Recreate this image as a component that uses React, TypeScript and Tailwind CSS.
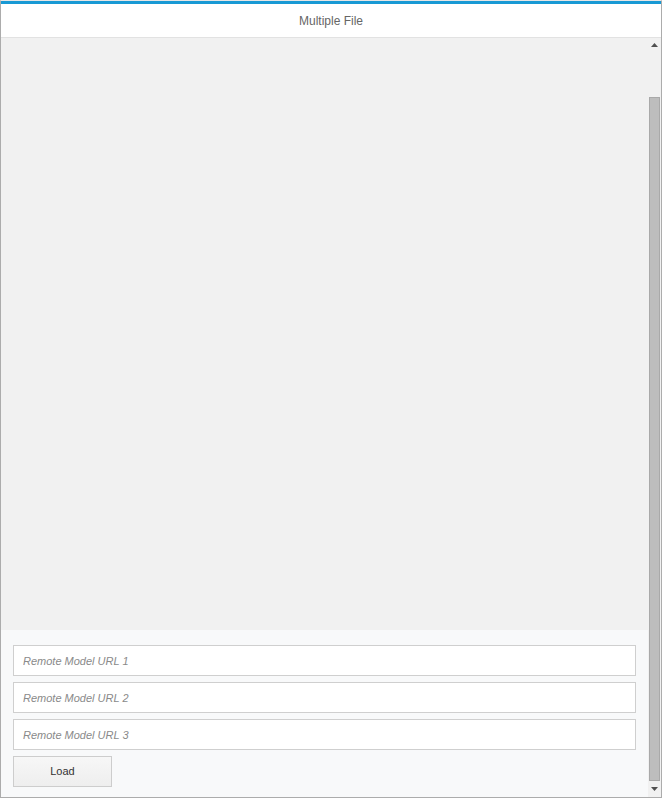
import React from "react";

const urls = ["Remote Model URL 1", "Remote Model URL 2", "Remote Model URL 3"];

function Scrollbar() {
  return (
    <div className="flex w-[13px] shrink-0 flex-col bg-[#f1f1f1]">
      <div className="flex h-[14px] items-center justify-center">
        <svg width="7" height="4" viewBox="0 0 7 4">
          <path d="M0 4 L3.5 0 L7 4 Z" fill="#505050" />
        </svg>
      </div>
      <div className="flex flex-1 flex-col px-px">
        <div className="h-[45px]" />
        <div className="flex-1 border border-[#a9a9a9] bg-[#bdbdbd]" />
      </div>
      <div className="flex h-[16px] items-center justify-center">
        <svg width="7" height="4" viewBox="0 0 7 4">
          <path d="M0 0 L7 0 L3.5 4 Z" fill="#505050" />
        </svg>
      </div>
    </div>
  );
}

export default function App() {
  return (
    <div className="flex h-[798px] w-[662px] flex-col border-x border-b border-t border-[#acacac] border-t-[#e6e6e6] bg-white font-['Liberation_Sans',Arial,sans-serif]">
      <div className="h-[3px] bg-[#1899d4]" />
      <header className="flex h-[34px] items-center justify-center border-b border-[#e2e2e2] text-[12px] text-[#666]">
        Multiple File
      </header>
      <div className="flex min-h-0 flex-1">
        <main className="flex flex-1 flex-col">
          <div className="flex-1 bg-[#f1f1f1]" />
          <div className="flex flex-col gap-[6px] bg-[#f8f9fa] px-3 pb-[10px] pt-[15px]">
            {urls.map((u) => (
              <input
                key={u}
                placeholder={u}
                className="h-[31px] border border-[#cfcfcf] bg-white px-[9px] text-[11px] italic text-[#333] outline-none placeholder:text-[#8a8a8a]"
              />
            ))}
            <button className="h-[31px] w-[99px] border border-[#cdcdcd] bg-gradient-to-b from-[#f7f7f7] to-[#eeeeee] text-[11px] text-[#333]">
              Load
            </button>
          </div>
        </main>
        <Scrollbar />
      </div>
    </div>
  );
}
